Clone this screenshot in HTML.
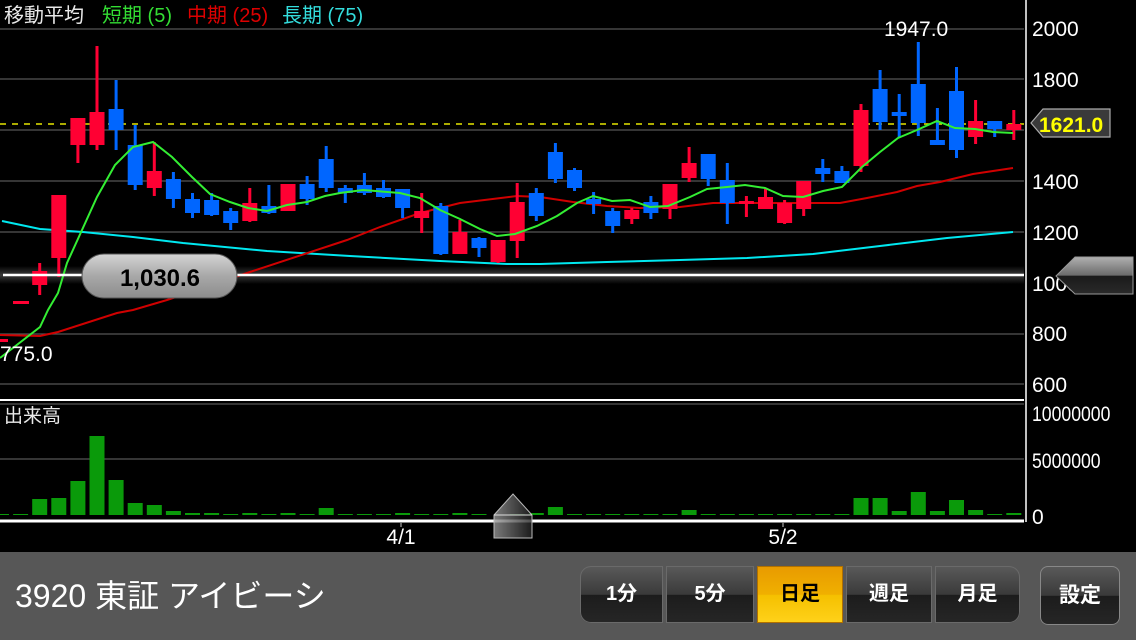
<!DOCTYPE html>
<html><head><meta charset="utf-8"><style>
html,body{margin:0;padding:0;background:#000;width:1136px;height:640px;overflow:hidden;font-family:"Liberation Sans","Noto Sans CJK JP",sans-serif}
#bar{position:absolute;left:0;top:552px;width:1136px;height:88px;background:#575757}
#title{position:absolute;left:15px;top:574px;color:#fff;font-size:32px;line-height:44px;white-space:nowrap}
.seg{position:absolute;top:566px;height:57px;background:linear-gradient(#5a5a5a,#3a3a3a 50%,#1c1c1c 51%,#262626);color:#fff;font-weight:bold;font-size:20px;line-height:57px;text-align:center;box-shadow:inset 0 0 0 1px #6a6a6a}
.on{background:linear-gradient(#e89a00,#f0b000 50%,#f5c000 51%,#ffd21a);color:#000;box-shadow:inset 0 0 0 1px #b07000}
</style></head><body>
<svg width="1136" height="552" style="position:absolute;left:0;top:0" xmlns="http://www.w3.org/2000/svg" font-family="Liberation Sans, Noto Sans CJK JP, sans-serif">
<defs>
<linearGradient id="pill" x1="0" y1="0" x2="0" y2="1"><stop offset="0" stop-color="#d4d4d4"/><stop offset="0.5" stop-color="#a8a8a8"/><stop offset="1" stop-color="#8c8c8c"/></linearGradient>
<linearGradient id="tag" x1="0" y1="0" x2="0" y2="1"><stop offset="0" stop-color="#b0b0b0"/><stop offset="0.5" stop-color="#6a6a6a"/><stop offset="0.51" stop-color="#1a1a1a"/><stop offset="1" stop-color="#2a2a2a"/></linearGradient>
<linearGradient id="glow" x1="0" y1="0" x2="0" y2="1"><stop offset="0" stop-color="#000"/><stop offset="0.5" stop-color="#3a3a3a"/><stop offset="1" stop-color="#000"/></linearGradient>
<linearGradient id="mk" x1="0" y1="0" x2="1" y2="0"><stop offset="0" stop-color="#999" stop-opacity=".8"/><stop offset="1" stop-color="#222" stop-opacity=".8"/></linearGradient>
</defs>
<g stroke="#555" stroke-width="1.2">
<line x1="0" y1="29" x2="1024" y2="29"/><line x1="0" y1="79" x2="1024" y2="79"/><line x1="0" y1="130" x2="1024" y2="130"/><line x1="0" y1="181" x2="1024" y2="181"/><line x1="0" y1="232" x2="1024" y2="232"/><line x1="0" y1="283" x2="1024" y2="283"/><line x1="0" y1="334" x2="1024" y2="334"/><line x1="0" y1="384" x2="1024" y2="384"/>
<line x1="0" y1="404" x2="1024" y2="404"/><line x1="0" y1="459" x2="1024" y2="459"/>
</g>
<line x1="0" y1="124" x2="1024" y2="124" stroke="#e6e600" stroke-width="1.5" stroke-dasharray="6,6"/>
<rect x="0" y="266" width="1024" height="18" fill="url(#glow)"/>
<polyline fill="none" stroke="#00e8f0" stroke-width="2" points="2,221 40,229 83,232 133,237 183,243 267,251 350,256 440,261 507,264 540,264 607,262 680,260 747,258 813,254 880,246 947,238 1013,232"/>
<polyline fill="none" stroke="#d00000" stroke-width="2" points="0,335 40,336 58,332 117,313 133,310 167,300 250,272 347,240 380,227 420,213 460,203 517,196 540,197 573,202 607,206 640,208 680,207 713,203 780,203 840,203 867,198 897,192 917,186 940,182 973,174 1013,168"/>
<g stroke-width="3">
<g fill="#ff0033" stroke="#ff0033">
<rect x="0" y="339" width="8" height="3" stroke="none"/>
<rect x="13" y="301" width="16" height="3" stroke="none"/>
<line x1="39.7" y1="263" x2="39.7" y2="295"/><rect x="32.2" y="271" width="15" height="14" stroke="none"/>
<line x1="58.8" y1="195" x2="58.8" y2="277"/><rect x="51.3" y="195" width="15" height="63" stroke="none"/>
<line x1="77.9" y1="118" x2="77.9" y2="163"/><rect x="70.4" y="118" width="15" height="27" stroke="none"/>
<line x1="97" y1="46" x2="97" y2="150"/><rect x="89.5" y="112" width="15" height="33" stroke="none"/>
<line x1="154.3" y1="142" x2="154.3" y2="196"/><rect x="146.8" y="171" width="15" height="17" stroke="none"/>
<line x1="249.8" y1="188" x2="249.8" y2="222"/><rect x="242.3" y="203" width="15" height="18" stroke="none"/>
<rect x="280.5" y="184" width="15" height="27" stroke="none"/>
<line x1="421.7" y1="193" x2="421.7" y2="233"/><rect x="414.2" y="211" width="15" height="7" stroke="none"/>
<line x1="459.9" y1="220" x2="459.9" y2="254"/><rect x="452.4" y="232" width="15" height="22" stroke="none"/>
<line x1="498.1" y1="240" x2="498.1" y2="263"/><rect x="490.6" y="240" width="15" height="22" stroke="none"/>
<line x1="517.2" y1="183" x2="517.2" y2="258"/><rect x="509.7" y="202" width="15" height="39" stroke="none"/>
<line x1="631.8" y1="208" x2="631.8" y2="224"/><rect x="624.3" y="210" width="15" height="9" stroke="none"/>
<line x1="670" y1="184" x2="670" y2="219"/><rect x="662.5" y="184" width="15" height="25" stroke="none"/>
<line x1="689.1" y1="147" x2="689.1" y2="182"/><rect x="681.6" y="163" width="15" height="15" stroke="none"/>
<line x1="746.4" y1="196" x2="746.4" y2="217"/><rect x="738.9" y="201" width="15" height="3" stroke="none"/>
<line x1="765.5" y1="189" x2="765.5" y2="209"/><rect x="758" y="197" width="15" height="12" stroke="none"/>
<line x1="784.6" y1="200" x2="784.6" y2="224"/><rect x="777.1" y="203" width="15" height="20" stroke="none"/>
<line x1="803.7" y1="181" x2="803.7" y2="216"/><rect x="796.2" y="181" width="15" height="28" stroke="none"/>
<line x1="861" y1="104" x2="861" y2="172"/><rect x="853.5" y="110" width="15" height="56" stroke="none"/>
<line x1="975.6" y1="100" x2="975.6" y2="144"/><rect x="968.1" y="121" width="15" height="16" stroke="none"/>
<line x1="1013.8" y1="110" x2="1013.8" y2="140"/><rect x="1006.3" y="124" width="15" height="6" stroke="none"/>
</g>
<g fill="#0066ff" stroke="#0066ff">
<line x1="116.1" y1="80" x2="116.1" y2="150"/><rect x="108.6" y="109" width="15" height="21" stroke="none"/>
<line x1="135.2" y1="125" x2="135.2" y2="190"/><rect x="127.7" y="145" width="15" height="40" stroke="none"/>
<line x1="173.4" y1="172" x2="173.4" y2="208"/><rect x="165.9" y="179" width="15" height="20" stroke="none"/>
<line x1="192.5" y1="193" x2="192.5" y2="218"/><rect x="185" y="199" width="15" height="14" stroke="none"/>
<line x1="211.6" y1="193" x2="211.6" y2="216"/><rect x="204.1" y="200" width="15" height="15" stroke="none"/>
<line x1="230.7" y1="208" x2="230.7" y2="230"/><rect x="223.2" y="211" width="15" height="12" stroke="none"/>
<line x1="268.9" y1="185" x2="268.9" y2="214"/><rect x="261.4" y="206" width="15" height="7" stroke="none"/>
<line x1="307.1" y1="176" x2="307.1" y2="205"/><rect x="299.6" y="184" width="15" height="15" stroke="none"/>
<line x1="326.2" y1="146" x2="326.2" y2="192"/><rect x="318.7" y="159" width="15" height="29" stroke="none"/>
<line x1="345.3" y1="185" x2="345.3" y2="203"/><rect x="337.8" y="188" width="15" height="5" stroke="none"/>
<line x1="364.4" y1="173" x2="364.4" y2="195"/><rect x="356.9" y="185" width="15" height="8" stroke="none"/>
<line x1="383.5" y1="180" x2="383.5" y2="198"/><rect x="376" y="188" width="15" height="9" stroke="none"/>
<line x1="402.6" y1="189" x2="402.6" y2="218"/><rect x="395.1" y="189" width="15" height="19" stroke="none"/>
<line x1="440.8" y1="203" x2="440.8" y2="255"/><rect x="433.3" y="206" width="15" height="48" stroke="none"/>
<line x1="479" y1="237" x2="479" y2="257"/><rect x="471.5" y="238" width="15" height="10" stroke="none"/>
<line x1="536.3" y1="188" x2="536.3" y2="221"/><rect x="528.8" y="193" width="15" height="23" stroke="none"/>
<line x1="555.4" y1="143" x2="555.4" y2="183"/><rect x="547.9" y="152" width="15" height="27" stroke="none"/>
<line x1="574.5" y1="168" x2="574.5" y2="191"/><rect x="567" y="170" width="15" height="18" stroke="none"/>
<line x1="593.6" y1="192" x2="593.6" y2="214"/><rect x="586.1" y="199" width="15" height="5" stroke="none"/>
<line x1="612.7" y1="208" x2="612.7" y2="233"/><rect x="605.2" y="211" width="15" height="15" stroke="none"/>
<line x1="650.9" y1="196" x2="650.9" y2="219"/><rect x="643.4" y="202" width="15" height="11" stroke="none"/>
<line x1="708.2" y1="154" x2="708.2" y2="186"/><rect x="700.7" y="154" width="15" height="25" stroke="none"/>
<line x1="727.3" y1="163" x2="727.3" y2="224"/><rect x="719.8" y="180" width="15" height="23" stroke="none"/>
<line x1="822.8" y1="159" x2="822.8" y2="182"/><rect x="815.3" y="168" width="15" height="6" stroke="none"/>
<line x1="841.9" y1="166" x2="841.9" y2="183"/><rect x="834.4" y="171" width="15" height="12" stroke="none"/>
<line x1="880.1" y1="70" x2="880.1" y2="130"/><rect x="872.6" y="89" width="15" height="33" stroke="none"/>
<line x1="899.2" y1="94" x2="899.2" y2="138"/><rect x="891.7" y="112" width="15" height="4" stroke="none"/>
<line x1="918.3" y1="42" x2="918.3" y2="136"/><rect x="910.8" y="84" width="15" height="39" stroke="none"/>
<line x1="937.4" y1="108" x2="937.4" y2="145"/><rect x="929.9" y="140" width="15" height="5" stroke="none"/>
<line x1="956.5" y1="67" x2="956.5" y2="158"/><rect x="949" y="91" width="15" height="59" stroke="none"/>
<line x1="994.7" y1="121" x2="994.7" y2="137"/><rect x="987.2" y="121" width="15" height="8" stroke="none"/>
</g>
</g>
<polyline fill="none" stroke="#33ee33" stroke-width="2" points="0,358 40,327 48,310 58,293 67,263 82,230 97,197 115,165 133,147 153,142 172,157 192,177 210,194 230,202 248,208 267,211 287,205 307,202 325,196 340,193 363,190 400,193 420,198 440,210 460,219 480,229 497,236 515,234 537,226 557,216 577,203 593,196 612,201 630,200 650,207 668,206 690,197 707,189 727,187 745,185 765,188 783,196 803,197 823,191 842,187 862,167 880,152 898,138 917,130 937,121 955,128 975,129 993,132 1013,133"/>
<line x1="3" y1="275" x2="1024" y2="275" stroke="#fff" stroke-width="2.5"/>
<rect x="82" y="254" width="155" height="44" rx="22" fill="url(#pill)" stroke="#555" stroke-width="1"/>
<text x="160" y="286" font-size="24" font-weight="bold" fill="#000" text-anchor="middle">1,030.6</text>
<line x1="1026" y1="0" x2="1026" y2="522" stroke="#fff" stroke-width="1.5"/>
<line x1="0" y1="400" x2="1024" y2="400" stroke="#fff" stroke-width="2"/>
<g fill="#0a9a0a">
<rect x="-6" y="514" width="15" height="1"/><rect x="13.1" y="514" width="15" height="1"/>
<rect x="32.2" y="499" width="15" height="16"/><rect x="51.3" y="498" width="15" height="17"/><rect x="70.4" y="481" width="15" height="34"/><rect x="89.5" y="436" width="15" height="79"/><rect x="108.6" y="480" width="15" height="35"/><rect x="127.7" y="503" width="15" height="12"/><rect x="146.8" y="505" width="15" height="10"/><rect x="165.9" y="511" width="15" height="4"/><rect x="185" y="513" width="15" height="2"/><rect x="204.1" y="513" width="15" height="2"/><rect x="223.2" y="514" width="15" height="1"/><rect x="242.3" y="513" width="15" height="2"/><rect x="261.4" y="514" width="15" height="1"/><rect x="280.5" y="513" width="15" height="2"/><rect x="299.6" y="514" width="15" height="1"/><rect x="318.7" y="508" width="15" height="7"/><rect x="337.8" y="514" width="15" height="1"/><rect x="356.9" y="514" width="15" height="1"/><rect x="376" y="514" width="15" height="1"/><rect x="395.1" y="513" width="15" height="2"/><rect x="414.2" y="514" width="15" height="1"/><rect x="433.3" y="514" width="15" height="1"/><rect x="452.4" y="513" width="15" height="2"/><rect x="471.5" y="514" width="15" height="1"/><rect x="509.7" y="514" width="15" height="1"/><rect x="528.8" y="513" width="15" height="2"/><rect x="547.9" y="507" width="15" height="8"/><rect x="567" y="514" width="15" height="1"/><rect x="586.1" y="514" width="15" height="1"/><rect x="605.2" y="514" width="15" height="1"/><rect x="624.3" y="514" width="15" height="1"/><rect x="643.4" y="514" width="15" height="1"/><rect x="662.5" y="514" width="15" height="1"/><rect x="681.6" y="510" width="15" height="5"/><rect x="700.7" y="514" width="15" height="1"/><rect x="719.8" y="514" width="15" height="1"/><rect x="738.9" y="514" width="15" height="1"/><rect x="758" y="514" width="15" height="1"/><rect x="777.1" y="514" width="15" height="1"/><rect x="796.2" y="514" width="15" height="1"/><rect x="815.3" y="514" width="15" height="1"/><rect x="834.4" y="514" width="15" height="1"/><rect x="853.5" y="498" width="15" height="17"/><rect x="872.6" y="498" width="15" height="17"/><rect x="891.7" y="511" width="15" height="4"/><rect x="910.8" y="492" width="15" height="23"/><rect x="929.9" y="511" width="15" height="4"/><rect x="949" y="500" width="15" height="15"/><rect x="968.1" y="510" width="15" height="5"/><rect x="987.2" y="514" width="15" height="1"/><rect x="1006.3" y="513" width="15" height="2"/>
</g>
<line x1="0" y1="521" x2="1024" y2="521" stroke="#fff" stroke-width="3"/>
<line x1="401" y1="522" x2="401" y2="527" stroke="#888" stroke-width="1.5"/>
<line x1="783" y1="522" x2="783" y2="527" stroke="#888" stroke-width="1.5"/>
<polygon points="494,515 513,494 532,515 532,538 494,538" fill="url(#mk)" stroke="#bbb" stroke-width="1"/>
<line x1="494" y1="515" x2="532" y2="515" stroke="#ddd" stroke-width="1"/>
<g font-size="20">
<text x="4" y="22" fill="#e8e8e8">移動平均</text>
<text x="102" y="22" fill="#33dd33">短期 (5)</text>
<text x="187" y="22" fill="#dd0000">中期 (25)</text>
<text x="282" y="22" fill="#33dddd">長期 (75)</text>
<text x="4" y="422" fill="#e8e8e8" font-size="19">出来高</text>
</g>
<g font-size="21" fill="#fff">
<text x="884" y="36">1947.0</text>
<text x="0" y="361">775.0</text>
<text x="1032" y="36">2000</text><text x="1032" y="87">1800</text><text x="1032" y="189">1400</text><text x="1032" y="240">1200</text><text x="1032" y="291">1000</text><text x="1032" y="341">800</text><text x="1032" y="392">600</text>
<text x="1032" y="421" transform="translate(1032,0) scale(0.84,1) translate(-1032,0)">10000000</text>
<text x="1032" y="468" transform="translate(1032,0) scale(0.84,1) translate(-1032,0)">5000000</text>
<text x="1032" y="524">0</text>
<text x="401" y="544" text-anchor="middle">4/1</text>
<text x="783" y="544" text-anchor="middle">5/2</text>
</g>
<polygon points="1056,276 1075,257 1133,257 1133,294 1075,294" fill="url(#tag)" stroke="#999" stroke-width="1"/>
<polygon points="1031,123 1043,109 1110,109 1110,137 1043,137" fill="#3a3a3a" stroke="#aaa" stroke-width="1.2"/>
<text x="1039" y="132" font-size="21" font-weight="bold" fill="#ffff00">1621.0</text>
</svg>
<div id="bar"></div>
<div id="title">3920 東証 アイビーシ</div>
<div class="seg" style="left:580px;width:83px;border-radius:11px 0 0 11px">1分</div>
<div class="seg" style="left:666px;width:88px">5分</div>
<div class="seg on" style="left:757px;width:86px">日足</div>
<div class="seg" style="left:846px;width:86px">週足</div>
<div class="seg" style="left:935px;width:85px;border-radius:0 11px 11px 0">月足</div>
<div class="seg" style="left:1040px;width:80px;height:59px;border-radius:8px;font-size:21px;line-height:59px;box-shadow:inset 0 0 0 1px #888">設定</div>
</body></html>
